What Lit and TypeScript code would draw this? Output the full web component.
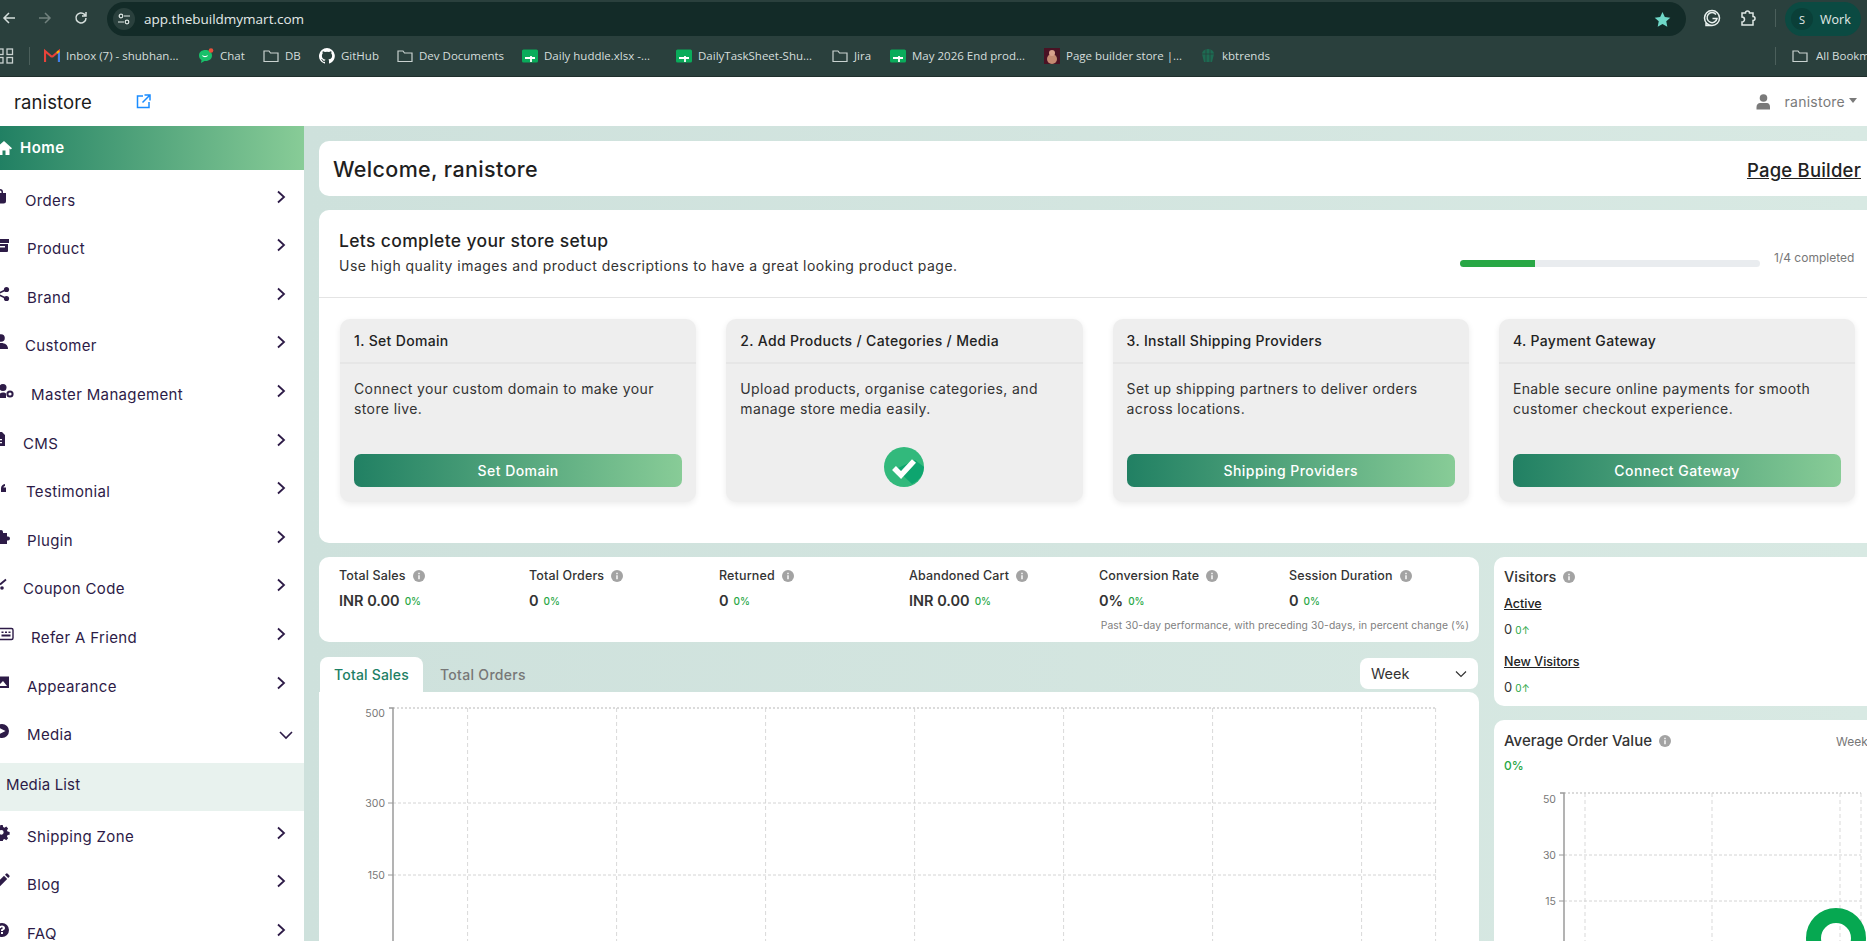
import { LitElement, html, css, svg } from "lit";
import { customElement } from "lit/decorators.js";

const ic = (inner: unknown, w = 16) => html`<svg width=${w} height="16" viewBox="0 0 16 16" fill="currentColor">${inner}</svg>`;

const navIcons: Record<string, unknown> = {
  home: svg`<path d="M8 1 0 8.2l1.2 1.3L2.5 8.4V15h4v-4.5h3V15h4V8.4l1.3 1.1L16 8.2z"/>`,
  bag: svg`<path d="M5 5V4a3 3 0 0 1 6 0v1h3v8a2.5 2.5 0 0 1-2.5 2.5h-7A2.500 2.500 0 0 1 2 13V5zm1.500 0h3V4a1.500 1.500 0 0 0-3 0z"/>`,
  box: svg`<path d="M1 2h14v4H1zM2 7h12v7a1 1 0 0 1-1 1H3a1 1 0 0 1-1-1zm3 2v1.500h6V9z"/>`,
  share: svg`<circle cx="3" cy="8" r="2.600"/><circle cx="12.500" cy="3.500" r="2.600"/><circle cx="12.500" cy="12.500" r="2.600"/><path d="M3 8l9.500-4.500M3 8l9.500 4.500" stroke="currentColor" stroke-width="1.500"/>`,
  user: svg`<circle cx="8" cy="4" r="3.800"/><path d="M1 15c0-4 3-6 7-6s7 2 7 6z"/>`,
  usercog: svg`<circle cx="5" cy="4.500" r="3.500"/><path d="M0 15c0-3.500 2-5.500 5-5.500 1.500 0 2.500.5 3 1v4.500z"/><circle cx="12" cy="11" r="2.600" fill="none" stroke="currentColor" stroke-width="2"/>`,
  file: svg`<path d="M2 1h7l3 3v11H0V1zM3 8v1.300h6V8zm0 3v1.300h6V11z" fill-rule="evenodd"/>`,
  quote: svg`<path d="M1 12V8.500C1 6 2.500 4.300 5 4v2c-1 .2-1.500.8-1.500 1.500H6V12z"/>`,
  puzzle: svg`<path d="M1 4h4V3a2 2 0 0 1 4 0v1h4v3.500h1a2 2 0 0 1 0 4h-1V15H1z"/>`,
  cut: svg`<circle cx="3" cy="11" r="1.800"/><path d="M1 7.500l6-5" stroke="currentColor" stroke-width="1.800"/>`,
  id: svg`<rect x="1" y="2.500" width="14" height="11" rx="1.500" fill="none" stroke="currentColor" stroke-width="1.400"/><path d="M3.500 5.500h2v1.500h-2zM7 5.500h2v1.500H7zM10.500 5.500h2v1.500h-2zM3.500 8.500h9v2h-9z"/>`,
  image: svg`<path d="M0 2.500h15V14H0zM2 12h11L9 7l-3 3-1.500-1.500z" fill-rule="evenodd"/>`,
  play: svg`<path d="M8 1a7 7 0 1 0 0 14A7 7 0 0 0 8 1zM5.500 5l6 3-6 3z" fill-rule="evenodd"/>`,
  gear: svg`<path d="M6.500 0h3l.4 2.200 1.500.7 1.900-1.200 2 2.100-1.200 1.800.7 1.600 2.200.4v3l-2.200.4-.7 1.600 1.200 1.800-2 2.100-1.900-1.200-1.500.7-.4 2.200h-3l-.4-2.200-1.500-.7-1.900 1.200-2-2.100 1.200-1.800-.7-1.600L0 9.600v-3l2.200-.4.7-1.600-1.200-1.800 2-2.100 1.900 1.200 1.500-.7zM8 5.500a2.500 2.500 0 1 0 0 5 2.500 2.500 0 0 0 0-5z" fill-rule="evenodd" transform="scale(.92)"/>`,
  pencil: svg`<path d="M1 15l.8-4L10 2.800l3.200 3.200L5 14.200zM11 1.800l1-1a1.200 1.200 0 0 1 1.700 0l1.500 1.500a1.200 1.200 0 0 1 0 1.700l-1 1z"/>`,
  help: svg`<path d="M8 1a7 7 0 1 0 0 14A7 7 0 0 0 8 1zM7 10h2v2H7zm0-1V7.500c1-.5 1.800-.8 1.800-1.500 0-.5-.4-.8-.9-.8-.6 0-1 .4-1.100 1L5 5.800C5.200 4.300 6.400 3.500 8 3.500c1.700 0 3 1 3 2.500 0 1.400-1 2-2 2.500V9z" fill-rule="evenodd"/>`,
};

const nav = [
  { l: "Orders", i: "bag", x: 25, o: -8 },
  { l: "Product", i: "box", x: 27, o: -6 },
  { l: "Brand", i: "share", x: 27, o: -6 },
  { l: "Customer", i: "user", x: 25, o: -7 },
  { l: "Master Management", i: "usercog", x: 31, o: -2 },
  { l: "CMS", i: "file", x: 23, o: -7 },
  { l: "Testimonial", i: "quote", x: 26, o: 0 },
  { l: "Plugin", i: "puzzle", x: 27, o: -6 },
  { l: "Coupon Code", i: "cut", x: 23, o: -1 },
  { l: "Refer A Friend", i: "id", x: 31, o: -2 },
  { l: "Appearance", i: "image", x: 27, o: -6 },
  { l: "Media", i: "play", x: 27, o: -6, open: true },
  { l: "Shipping Zone", i: "gear", x: 27, o: -6 },
  { l: "Blog", i: "pencil", x: 27, o: -6 },
  { l: "FAQ", i: "help", x: 27, o: -6 },
];

const folder = html`<svg width="16" height="16" viewBox="0 0 16 16" fill="none" stroke="#c9d2d0" stroke-width="1.200"><path d="M1 3h5l1.500 2H15v8.500H1z"/></svg>`;
const sheet = html`<svg width="16" height="16" viewBox="0 0 16 16"><rect y="1.500" width="16" height="13" rx="1.500" fill="#0aac5b"/><path d="M3 10h10M9 8v6" stroke="#fff" stroke-width="1.800"/></svg>`;
const gmail = html`<svg width="16" height="16" viewBox="0 0 16 16" fill="none"><path d="M1 14V3l7 6" stroke="#e8433a" stroke-width="2.200"/><path d="M15 14V3L8 9" stroke="#e8433a" stroke-width="2.200"/><path d="M15 14V4" stroke="#3c80ea" stroke-width="2.200"/><path d="M13 5l2-2" stroke="#f4b400" stroke-width="2.200"/></svg>`;
const chat = html`<svg width="16" height="16" viewBox="0 0 16 16"><path d="M7.500 2C3.500 2 1 4.200 1 7.500c0 2 1 3.500 2.500 4.500L3 15l3.500-2h1c4 0 6.500-2.300 6.500-5.500S11.500 2 7.500 2z" fill="#19c06a"/><path d="M4.500 7.500c1 1.500 4 1.500 5 0" stroke="#fff" stroke-width="1.200" fill="none"/><circle cx="13" cy="2.500" r="2.300" fill="#e8503a"/></svg>`;
const github = html`<svg width="16" height="16" viewBox="0 0 16 16" fill="#fff"><path d="M8 0a8 8 0 0 0-2.500 15.600c.4.100.5-.2.500-.4v-1.400c-2.200.5-2.700-1-2.700-1-.4-.9-.9-1.200-.9-1.200-.7-.5.100-.5.100-.5.800.1 1.200.8 1.200.8.700 1.200 1.900.9 2.300.7.100-.5.300-.9.500-1.100-1.800-.2-3.600-.9-3.600-4 0-.9.300-1.600.8-2.100-.1-.2-.4-1 .1-2.100 0 0 .7-.2 2.200.8a7.600 7.600 0 0 1 4 0c1.500-1 2.200-.8 2.200-.8.400 1.100.2 1.900.1 2.100.5.600.8 1.300.8 2.100 0 3.100-1.900 3.700-3.700 3.900.3.300.6.800.6 1.500v2.200c0 .2.100.5.600.4A8 8 0 0 0 8 0z"/></svg>`;
const thumb = html`<svg width="16" height="16" viewBox="0 0 16 16"><rect width="16" height="16" fill="#4a1224"/><ellipse cx="8" cy="11" rx="5" ry="5" fill="#c58b72"/><circle cx="8" cy="5" r="3" fill="#d9a28c"/></svg>`;
const kb = html`<svg width="16" height="16" viewBox="0 0 16 16"><path d="M2 6a6 5 0 0 1 12 0l-2 8H4z" fill="#1d6b52"/><path d="M2 6h12M6 1v13M10 1v13" stroke="#2a403d" stroke-width=".8"/></svg>`;

const bookmarks = [
  { w: 154, ic: gmail, t: "Inbox (7) - shubhan..." },
  { w: 65, ic: chat, t: "Chat" },
  { w: 56, ic: folder, t: "DB" },
  { w: 78, ic: github, t: "GitHub" },
  { w: 125, ic: folder, t: "Dev Documents" },
  { w: 154, ic: sheet, t: "Daily huddle.xlsx -..." },
  { w: 156, ic: sheet, t: "DailyTaskSheet-Shu..." },
  { w: 58, ic: folder, t: "Jira" },
  { w: 154, ic: sheet, t: "May 2026 End prod..." },
  { w: 156, ic: thumb, t: "Page builder store |..." },
  { w: 80, ic: kb, t: "kbtrends" },
];

const steps = [
  { t: "1. Set Domain", d: "Connect your custom domain to make your store live.", b: "Set Domain" },
  { t: "2. Add Products / Categories / Media", d: "Upload products, organise categories, and manage store media easily.", done: true },
  { t: "3. Install Shipping Providers", d: "Set up shipping partners to deliver orders across locations.", b: "Shipping Providers" },
  { t: "4. Payment Gateway", d: "Enable secure online payments for smooth customer checkout experience.", b: "Connect Gateway" },
];

const stats = [
  ["Total Sales", "INR 0.00"],
  ["Total Orders", "0"],
  ["Returned", "0"],
  ["Abandoned Cart", "INR 0.00"],
  ["Conversion Rate", "0%"],
  ["Session Duration", "0"],
];

const info = html`<svg class="info" width="12" height="12" viewBox="0 0 12 12"><circle cx="6" cy="6" r="6" fill="#a3a3a3"/><path d="M5.300 5.200h1.400v4H5.300zM5.300 2.800h1.400v1.400H5.300z" fill="#fff"/></svg>`;
const chev = html`<svg class="chev" width="10" height="14" viewBox="0 0 10 14" fill="none" stroke="currentColor" stroke-width="1.800"><path d="M2 1.500 8 7l-6 5.500"/></svg>`;
const chevD = html`<svg class="chevd" width="14" height="10" viewBox="0 0 14 10" fill="none" stroke="currentColor" stroke-width="1.600"><path d="M1 2l6 6 6-6"/></svg>`;

const FONT = "Inter";

function mainChart() {
  const xs = [148.6, 297.6, 446.6, 595.6, 744.6, 893.6, 1042.6, 1116.6];
  return html`<svg class="chart" width="1160" height="249" viewBox="0 0 1160 249">
    ${xs.map((x) => svg`<path d="M${x} 16V249" stroke="#d9d9d9" stroke-dasharray="4 3"/>`)}
    <path d="M74 16H1117" stroke="#cfcfcf" stroke-width="1.500" stroke-dasharray="2 2"/>
    <path d="M74 111H1117M74 183H1117" stroke="#d4d4d4" stroke-dasharray="3 2"/>
    <path d="M70 16h4V249" fill="none" stroke="#9a9a9a" stroke-width="1.500"/>
    <path d="M69 111h5M69 183h5" stroke="#9a9a9a"/>
    <g fill="#777" font-size="10.500" font-family=${FONT} text-anchor="end">
      <text x="66" y="25">500</text><text x="66" y="115">300</text><text x="66" y="187">150</text>
    </g>
  </svg>`;
}

function aovChart() {
  const xs = [91, 218, 346, 367];
  return html`<svg class="chart" width="373" height="161" viewBox="0 0 373 161">
    ${xs.map((x) => svg`<path d="M${x} 13V161" stroke="#d9d9d9" stroke-dasharray="4 3"/>`)}
    <path d="M70 13H367" stroke="#cfcfcf" stroke-width="1.500" stroke-dasharray="2 2"/>
    <path d="M70 75H367M70 121H367" stroke="#d4d4d4" stroke-dasharray="3 2"/>
    <path d="M66 13h4V161" fill="none" stroke="#9a9a9a" stroke-width="1.500"/>
    <path d="M65 75h5M65 121h5" stroke="#9a9a9a"/>
    <g fill="#777" font-size="10.500" font-family=${FONT} text-anchor="end">
      <text x="62" y="23">50</text><text x="62" y="79">30</text><text x="62" y="125">15</text>
    </g>
  </svg>`;
}

@customElement("app-root")
export class AppRoot extends LitElement {
  static styles = css`
    :host { display: block; position: relative; width: 1867px; height: 941px; overflow: hidden; background: #fff; font-family: "Inter", "Liberation Sans", sans-serif; color: #212529; }
    * { box-sizing: border-box; }
    svg { flex: none; display: block; }

    .toolbar { height: 36px; background: #2a403d; display: flex; align-items: flex-start; }
    .navbtn { width: 36px; height: 36px; display: flex; align-items: center; justify-content: center; color: #d5dedc; }
    .navbtn.dim { color: #71817e; }
    .navs { display: flex; margin-left: -9px; margin-right: 8px; }
    .omni { margin-top: 2px; width: 1579px; height: 34px; border-radius: 17px; background: #132b28; display: flex; align-items: center; padding: 0 15px 0 6px; }
    .tune { width: 22px; height: 22px; border-radius: 50%; background: #2a403d; display: flex; align-items: center; justify-content: center; margin-right: 9px; }
    .url { font: 13.500px "Open Sans", sans-serif; color: #e3eae8; flex: 1; }
    .ext { width: 36px; display: flex; justify-content: center; align-items: center; height: 36px; color: #dfe7e5; }
    .gram { margin-left: 8px; }
    .vsep { width: 1px; height: 18px; background: #4b5f5b; margin: 9px 9px 0; flex: none; }
    .profile { margin-top: 2px; width: 76px; height: 34px; border-radius: 17px; background: #0b4a42; display: flex; align-items: center; padding-left: 6px; gap: 7px; font: 12.500px "Open Sans", sans-serif; color: #e3eae8; }
    .avatar { width: 22px; height: 22px; border-radius: 50%; background: #0a3f38; display: flex; align-items: center; justify-content: center; font-size: 11px; }

    .bookmarks { height: 41px; background: #2a403d; border-bottom: 1px solid #1f2f2c; padding-bottom: 1px; display: flex; align-items: center; font: 11.500px "Open Sans", sans-serif; color: #d5dedc; white-space: nowrap; }
    .apps { margin-right: 15px; width: 14px; overflow: hidden; }
    .bmsep { width: 1px; height: 18px; background: #4b5f5b; margin-right: 14px; flex: none; }
    .bm { display: flex; align-items: center; gap: 6px; flex: none; }
    .bmright { margin-left: auto; display: flex; align-items: center; width: 92px; flex: none; }
    .bmright .vs { width: 1px; height: 18px; background: #4b5f5b; margin-right: 16px; flex: none; }
    .bmright .bm { flex: none; gap: 8px; }

    .top { height: 49px; background: #fff; display: flex; align-items: center; padding: 0 10px 0 14px; }
    .brand { font-size: 18.500px; color: #1b1b1b; width: 122px; letter-spacing: .1px; }
    .ext-link { color: #1a8cff; }
    .user { margin-left: auto; display: flex; align-items: center; color: #7a7a7a; font-size: 14px; letter-spacing: .25px; }
    .user svg.u { margin-right: 14px; }
    .caret { width: 0; height: 0; border: 4px solid transparent; border-top: 5px solid #7a7a7a; border-bottom: 0; margin-left: 4px; margin-bottom: 3px; }

    .body { display: flex; height: 815px; overflow: hidden; }
    .side { width: 304px; flex: none; background: #fff; color: #2d1b47; font-size: 15px; overflow: hidden; }
    .home { height: 44px; background: linear-gradient(90deg, #218063, #88cc97); color: #fff; font-weight: 600; font-size: 15px; letter-spacing: .5px; display: flex; align-items: center; padding-left: 20px; padding-bottom: 1px; }
    .homeic { margin-left: -24px; margin-right: 8px; }
    .items { padding-top: 6.400px; }
    .item { height: 48.600px; display: flex; align-items: center; position: relative; padding-right: 15px; letter-spacing: .35px; padding-bottom: 1px; }
    .ni { position: absolute; top: 12px; }
    .item .lab { flex: 1; }
    .chev { margin: 0 3px 7px 0; }
    .chevd { margin-right: -4px; }
    .sub { height: 48px; margin: 3px 0 2px; background: #e8f2ee; display: flex; align-items: center; padding-left: 6px; padding-bottom: 5px; letter-spacing: .15px; }

    .main { flex: 1; min-width: 0; background: linear-gradient(90deg, #cee1dc, #d8e9e3); padding: 15px 0 0 15px; display: flex; flex-direction: column; gap: 14px; }
    .card { background: #fff; border-radius: 10px; }
    .welcome { height: 55px; display: flex; align-items: center; justify-content: space-between; padding: 0 6px 0 14px; flex: none; border-radius: 10px 0 0 10px; }
    .welcome h1 { margin: 0; font-size: 21.500px; font-weight: 500; color: #1f1f1f; letter-spacing: .35px; }
    .pb { font-size: 18.500px; font-weight: 500; color: #222; text-decoration: underline; margin-top: 3px; letter-spacing: .2px; }
    .setup { height: 333px; flex: none; border-radius: 10px 0 0 10px; }
    .sethead { height: 88px; border-bottom: 1.500px solid #e4e4e4; display: flex; padding: 19px 9px 0 20px; }
    .settext { flex: 1; }
    .settext h2 { margin: 0; font-size: 17.500px; font-weight: 500; line-height: 24px; color: #1f1f1f; letter-spacing: .35px; }
    .settext p { margin: 2px 0 0; font-size: 14px; line-height: 22px; color: #333; letter-spacing: .46px; }
    .prog { width: 300px; height: 7px; border-radius: 4px; background: #e9ecef; margin: 31px 14px 0 0; overflow: hidden; }
    .prog div { height: 100%; background: #28a745; }
    .ptext { font-size: 12px; color: #777; margin-top: 21px; width: 84px; white-space: nowrap; }
    .steps { display: grid; grid-template-columns: repeat(4, 356.300px); gap: 30px; padding: 21px 0 0 21px; }
    .step { height: 183px; background: #eee; border-radius: 10px; box-shadow: 0 2px 6px rgba(0,0,0,.08); display: flex; flex-direction: column; }
    .shead { height: 45px; flex: none; border-bottom: 2px solid #e6e6e6; padding: 0 14px; display: flex; align-items: center; font-size: 14px; font-weight: 500; color: #222; letter-spacing: .33px; }
    .sbody { flex: 1; padding: 15px 14px 15px; display: flex; flex-direction: column; justify-content: space-between; }
    .sbody p { margin: 0; font-size: 14px; line-height: 20px; color: #333; letter-spacing: .39px; }
    .btn { height: 33px; border-radius: 7px; padding-bottom: 1px; background: linear-gradient(90deg, #218063, #88cc97); color: #fff; font-size: 14px; font-weight: 500; letter-spacing: .45px; display: flex; align-items: center; justify-content: center; }
    .done { align-self: center; }

    .lower { display: grid; grid-template-columns: 1160px 373px; gap: 15px; flex: none; }
    .col { display: flex; flex-direction: column; }
    .statcard { height: 85px; padding: 10px 10px 0 20px; }
    .stats { display: grid; grid-template-columns: repeat(6, 190px); }
    .stl { display: flex; align-items: center; gap: 7px; font-size: 12.500px; line-height: 18px; color: #333; font-weight: 500; white-space: nowrap; letter-spacing: .15px; }
    .stv { display: flex; align-items: center; gap: 5px; margin-top: 5px; line-height: 22px; font-size: 14.500px; font-weight: 600; color: #333; }
    .pct { font-size: 10px; color: #28a745; font-weight: 500; }
    .note { text-align: right; font-size: 10.300px; color: #808080; line-height: 14px; margin-top: 6px; letter-spacing: .1px; }
    .tabrow { display: flex; align-items: flex-start; margin-top: 15px; height: 35px; }
    .tab { width: 103px; height: 35px; padding-bottom: 1px; margin-left: 1px; border-radius: 8px 8px 0 0; background: #fff; color: #1d8065; font-size: 14px; font-weight: 500; letter-spacing: .2px; display: flex; align-items: center; justify-content: center; }
    .tab2 { margin-left: 17px; height: 35px; padding-bottom: 1px; display: flex; align-items: center; color: #777; font-size: 14px; font-weight: 500; letter-spacing: .3px; }
    .sel { margin-left: auto; margin-top: 1px; margin-right: 1px; width: 118px; height: 31px; background: #fff; border-radius: 8px; display: flex; align-items: center; justify-content: space-between; padding: 0 11px; font-size: 14.500px; color: #333; }
    .chartcard { border-radius: 0 10px 0 0; height: 300px; }
    .visitors { height: 149px; padding: 10px 10px 0; border-radius: 10px 0 0 10px; }
    .vt { display: flex; align-items: center; gap: 7px; font-size: 15px; font-weight: 500; color: #333; line-height: 20px; }
    .vis { font-size: 14.500px; }
    .va { font-size: 12.500px; font-weight: 500; color: #222; text-decoration: underline; line-height: 16px; margin-top: 9px; }
    .vv { display: flex; align-items: baseline; gap: 3px; font-size: 13px; color: #333; margin-top: 9px; line-height: 16px; }
    .vv span { font-size: 10px; color: #28a745; }
    .vv + .va { margin-top: 16px; }
    .aov { margin-top: 14px; border-radius: 10px 0 0 0; height: 240px; position: relative; }
    .aovh { display: flex; align-items: center; justify-content: space-between; padding: 11px 0 0 10px; height: 31px; }
    .wk { font-size: 12px; color: #777; width: 31px; overflow: hidden; }
    .aovp { padding-left: 10px; margin-top: 7px; font-size: 12px; font-weight: 500; color: #28a745; line-height: 16px; height: 16px; }
    .aovc { margin-top: 6px; }
    .ring { position: absolute; left: 1806px; top: 908px; width: 60px; height: 60px; border: 15px solid #06a851; border-radius: 50%; }
  `;

  render() {
    return html`
      <div class="toolbar">
        <div class="navs">
          <div class="navbtn"><svg width="16" height="16" viewBox="0 0 16 16" fill="none" stroke="currentColor" stroke-width="1.500"><path d="M14 8H3M8 3 3 8l5 5"/></svg></div>
          <div class="navbtn dim"><svg width="16" height="16" viewBox="0 0 16 16" fill="none" stroke="currentColor" stroke-width="1.500"><path d="M2 8h11M8 3l5 5-5 5"/></svg></div>
          <div class="navbtn"><svg width="16" height="16" viewBox="0 0 16 16" fill="none" stroke="currentColor" stroke-width="1.500"><path d="M13 8a5 5 0 1 1-1.500-3.600L13 6M13 2v4H9"/></svg></div>
        </div>
        <div class="omni">
          <div class="tune"><svg width="14" height="14" viewBox="0 0 14 14" fill="none" stroke="#dfe7e5" stroke-width="1.200"><circle cx="4" cy="4" r="1.800"/><path d="M7 4h6M1 10h6"/><circle cx="10" cy="10" r="1.800"/></svg></div>
          <div class="url">app.thebuildmymart.com</div>
          <svg width="17" height="17" viewBox="0 0 24 24" fill="#6fd8c8"><path d="M12 1.500l3.300 7 7.700.9-5.700 5.200 1.500 7.600L12 18.400l-6.800 3.800 1.500-7.600L1 9.400l7.700-.9z"/></svg>
        </div>
        <div class="ext gram"><svg width="18" height="18" viewBox="0 0 18 18" fill="none" stroke="#e8f0ee" stroke-width="1.500"><path d="M9 1.500a7.500 7.500 0 1 0 0 15H3V13"/><path d="M13 5.500a5 5 0 1 0 1 4H9.500"/><path d="M9 16.500a7.500 7.500 0 0 0 7.500-7.500A7.500 7.500 0 0 0 9 1.500"/></svg></div>
        <div class="ext"><svg width="18" height="18" viewBox="0 0 18 18" fill="none" stroke="currentColor" stroke-width="1.500"><path d="M3 4h3.500a2 2 0 0 1 4 0H14v3.500a2 2 0 0 1 0 4V16H3v-3a2 2 0 0 0 0-5z"/></svg></div>
        <div class="vsep"></div>
        <div class="profile"><div class="avatar">S</div>Work</div>
      </div>
      <div class="bookmarks">
        <div class="apps"><svg width="18" height="16" viewBox="0 0 18 16" fill="none" stroke="#c9d2d0" stroke-width="1.300"><rect x="-2.500" y="1" width="5.500" height="5.500"/><rect x="7" y="1" width="5.500" height="5.500"/><rect x="-2.500" y="9.500" width="5.500" height="5.500"/><rect x="7" y="9.500" width="5.500" height="5.500"/></svg></div>
        <div class="bmsep"></div>
        ${bookmarks.map((b) => html`<div class="bm" style="width:${b.w}px">${b.ic}<span>${b.t}</span></div>`)}
        <div class="bmright"><div class="vs"></div><div class="bm">${folder}<span>All Bookmarks</span></div></div>
      </div>
      <div class="top">
        <div class="brand">ranistore</div>
        <svg class="ext-link" width="15" height="15" viewBox="0 0 15 15" fill="none" stroke="currentColor" stroke-width="1.500"><path d="M7 2H1.500v11.500H13V8M8.500 1H14v5.500M14 1 6.500 8.500"/></svg>
        <div class="user">
          <svg class="u" width="15" height="16" viewBox="0 0 15 16" fill="#7a7a7a"><circle cx="7.500" cy="4" r="3.800"/><path d="M.5 15.500V13c0-2.500 2-4 3.500-4h7c1.500 0 3 1.500 3 4v2.500z"/></svg>
          ranistore<span class="caret"></span>
        </div>
      </div>
      <div class="body">
        <aside class="side">
          <div class="home"><span class="homeic">${ic(navIcons.home)}</span>Home</div>
          <div class="items">
            ${nav.map((n) => html`
              <div class="item" style="padding-left:${n.x}px">
                <span class="ni" style="left:${n.o}px">${ic(navIcons[n.i])}</span>
                <span class="lab">${n.l}</span>
                ${n.open ? chevD : chev}
              </div>
              ${n.open ? html`<div class="sub">Media List</div>` : ""}
            `)}
          </div>
        </aside>
        <main class="main">
          <div class="card welcome"><h1>Welcome, ranistore</h1><span class="pb">Page Builder</span></div>
          <div class="card setup">
            <div class="sethead">
              <div class="settext">
                <h2>Lets complete your store setup</h2>
                <p>Use high quality images and product descriptions to have a great looking product page.</p>
              </div>
              <div class="prog"><div style="width:25%"></div></div>
              <div class="ptext">1/4 completed</div>
            </div>
            <div class="steps">
              ${steps.map((s) => html`
                <div class="step">
                  <div class="shead">${s.t}</div>
                  <div class="sbody">
                    <p>${s.d}</p>
                    ${s.done
                      ? html`<svg class="done" width="40" height="40" viewBox="0 0 40 40"><circle cx="20" cy="20" r="20" fill="#32b97c"/><path d="M12 22l16 15a20 20 0 0 0 12-17L31 13z" fill="#0ea56f"/><path d="M10 21l7 7 13-14" fill="none" stroke="#fff" stroke-width="5.500"/></svg>`
                      : html`<div class="btn">${s.b}</div>`}
                  </div>
                </div>`)}
            </div>
          </div>
          <div class="lower">
            <div class="col">
              <div class="card statcard">
                <div class="stats">
                  ${stats.map((s) => html`<div>
                    <div class="stl">${s[0]} ${info}</div>
                    <div class="stv">${s[1]} <span class="pct">0%</span></div>
                  </div>`)}
                </div>
                <div class="note">Past 30-day performance, with preceding 30-days, in percent change (%)</div>
              </div>
              <div class="tabrow">
                <div class="tab">Total Sales</div>
                <div class="tab2">Total Orders</div>
                <div class="sel">Week <svg width="12" height="8" viewBox="0 0 12 8" fill="none" stroke="#333" stroke-width="1.200"><path d="M1 1.500l5 5 5-5"/></svg></div>
              </div>
              <div class="card chartcard">${mainChart()}</div>
            </div>
            <div class="col">
              <div class="card visitors">
                <div class="vt vis">Visitors ${info}</div>
                <div class="va">Active</div>
                <div class="vv">0 <span>0↑</span></div>
                <div class="va">New Visitors</div>
                <div class="vv">0 <span>0↑</span></div>
              </div>
              <div class="card aov">
                <div class="aovh"><div class="vt">Average Order Value ${info}</div><div class="wk">Week</div></div>
                <div class="aovp">0%</div>
                <div class="aovc">${aovChart()}</div>
              </div>
            </div>
          </div>
        </main>
      </div>
      <div class="ring"></div>
    `;
  }
}
